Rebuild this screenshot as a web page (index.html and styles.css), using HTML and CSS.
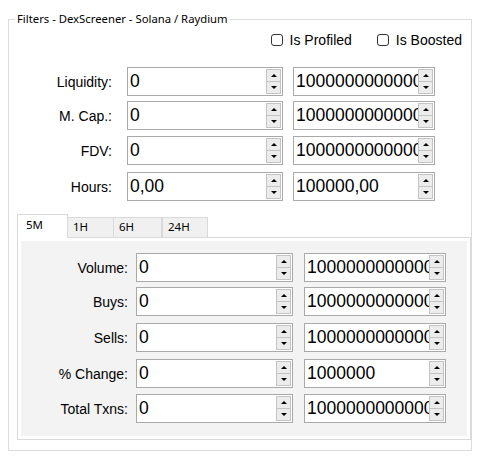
FILE: index.html
```html
<!DOCTYPE html>
<html>
<head>
<meta charset="utf-8">
<link rel="stylesheet" href="styles.css">
</head>
<body>
<div class="group">
  <span class="legend">Filters - DexScreener - Solana / Raydium</span>
  <div class="checks">
    <label class="check"><span class="box"></span>Is Profiled</label>
    <label class="check"><span class="box"></span>Is Boosted</label>
  </div>
  <div class="fields">
    <div class="row r1">
      <span class="lbl">Liquidity:</span>
      <div class="spin s1"><span class="val">0</span><span class="btns"><span class="btn"><i class="up"></i></span><span class="btn"><i class="dn"></i></span></span></div>
      <div class="spin s2"><span class="val">1000000000000</span><span class="btns"><span class="btn"><i class="up"></i></span><span class="btn"><i class="dn"></i></span></span></div>
    </div>
    <div class="row r2">
      <span class="lbl">M. Cap.:</span>
      <div class="spin s1"><span class="val">0</span><span class="btns"><span class="btn"><i class="up"></i></span><span class="btn"><i class="dn"></i></span></span></div>
      <div class="spin s2"><span class="val">1000000000000</span><span class="btns"><span class="btn"><i class="up"></i></span><span class="btn"><i class="dn"></i></span></span></div>
    </div>
    <div class="row r3">
      <span class="lbl">FDV:</span>
      <div class="spin s1"><span class="val">0</span><span class="btns"><span class="btn"><i class="up"></i></span><span class="btn"><i class="dn"></i></span></span></div>
      <div class="spin s2"><span class="val">1000000000000</span><span class="btns"><span class="btn"><i class="up"></i></span><span class="btn"><i class="dn"></i></span></span></div>
    </div>
    <div class="row r4">
      <span class="lbl">Hours:</span>
      <div class="spin s1"><span class="val">0,00</span><span class="btns"><span class="btn"><i class="up"></i></span><span class="btn"><i class="dn"></i></span></span></div>
      <div class="spin s2"><span class="val">100000,00</span><span class="btns"><span class="btn"><i class="up"></i></span><span class="btn"><i class="dn"></i></span></span></div>
    </div>
  </div>

  <div class="tabs">
    <div class="tabstrip">
      <span class="tab sel">5M</span>
      <span class="tab t1">1H</span>
      <span class="tab t2">6H</span>
      <span class="tab t3">24H</span>
    </div>
    <div class="panel">
      <div class="page">
        <div class="row p1">
          <span class="lbl">Volume:</span>
          <div class="spin s1"><span class="val">0</span><span class="btns"><span class="btn"><i class="up"></i></span><span class="btn"><i class="dn"></i></span></span></div>
          <div class="spin s2"><span class="val">1000000000000</span><span class="btns"><span class="btn"><i class="up"></i></span><span class="btn"><i class="dn"></i></span></span></div>
        </div>
        <div class="row p2">
          <span class="lbl">Buys:</span>
          <div class="spin s1"><span class="val">0</span><span class="btns"><span class="btn"><i class="up"></i></span><span class="btn"><i class="dn"></i></span></span></div>
          <div class="spin s2"><span class="val">1000000000000</span><span class="btns"><span class="btn"><i class="up"></i></span><span class="btn"><i class="dn"></i></span></span></div>
        </div>
        <div class="row p3">
          <span class="lbl">Sells:</span>
          <div class="spin s1"><span class="val">0</span><span class="btns"><span class="btn"><i class="up"></i></span><span class="btn"><i class="dn"></i></span></span></div>
          <div class="spin s2"><span class="val">1000000000000</span><span class="btns"><span class="btn"><i class="up"></i></span><span class="btn"><i class="dn"></i></span></span></div>
        </div>
        <div class="row p4">
          <span class="lbl">% Change:</span>
          <div class="spin s1"><span class="val">0</span><span class="btns"><span class="btn"><i class="up"></i></span><span class="btn"><i class="dn"></i></span></span></div>
          <div class="spin s2"><span class="val">1000000</span><span class="btns"><span class="btn"><i class="up"></i></span><span class="btn"><i class="dn"></i></span></span></div>
        </div>
        <div class="row p5">
          <span class="lbl">Total Txns:</span>
          <div class="spin s1"><span class="val">0</span><span class="btns"><span class="btn"><i class="up"></i></span><span class="btn"><i class="dn"></i></span></span></div>
          <div class="spin s2"><span class="val">1000000000000</span><span class="btns"><span class="btn"><i class="up"></i></span><span class="btn"><i class="dn"></i></span></span></div>
        </div>
      </div>
    </div>
  </div>
</div>
</body>
</html>
```

FILE: styles.css
```css
html, body {
  margin: 0;
  padding: 0;
  background: #ffffff;
}
body {
  font-family: "Liberation Sans", Arial, sans-serif;
  color: #000;
}
.group {
  position: relative;
  box-sizing: border-box;
  margin: 19px 0 0 8px;
  width: 464px;
  height: 432px;
  border: 1px solid #dcdcdc;
}
.legend {
  position: absolute;
  left: 6px;
  top: -9px;
  padding: 0 2px 0 2px;
  background: #fff;
  font-family: "Noto Sans", "Open Sans", sans-serif;
  font-size: 11.3px;
  line-height: 16px;
}
.checks {
  display: flex;
  justify-content: flex-end;
  gap: 25px;
  margin-top: 12px;
  height: 16px;
  padding-right: 9px;
}
.check {
  display: flex;
  align-items: center;
  gap: 7px;
  font-size: 14px;
  line-height: 16px;
}
.box {
  box-sizing: border-box;
  width: 12px;
  height: 12px;
  border: 1px solid #333;
  border-radius: 3px;
  background: #fff;
}
.fields {
  margin-top: 19px;
}
.row {
  display: flex;
  align-items: center;
}
.lbl {
  width: 103px;
  text-align: right;
  font-size: 14px;
  line-height: 16px;
  white-space: nowrap;
}
.s1 { width: 156px; margin-left: 15px; }
.s2 { width: 142px; margin-left: 10px; }
.r2 { margin-top: 5px; }
.r3 { margin-top: 6px; }
.r4 { margin-top: 7px; }
.spin {
  box-sizing: border-box;
  display: flex;
  height: 29px;
  border: 1px solid #a9a9a9;
  background: #fff;
}
.val {
  flex: 1;
  min-width: 0;
  overflow: hidden;
  white-space: nowrap;
  padding-left: 2px;
  font-size: 17.5px;
  line-height: 27px;
}
.btns {
  display: flex;
  flex-direction: column;
  width: 15px;
  padding: 1px 1px 1px 0;
}
.btn {
  box-sizing: border-box;
  flex: 1;
  display: flex;
  align-items: center;
  justify-content: center;
  background: #ececec;
  border: 1px solid #c4c4c4;
}
.btn + .btn { border-top: none; }
.up {
  width: 0;
  height: 0;
  border-left: 3px solid transparent;
  border-right: 3px solid transparent;
  border-bottom: 3px solid #000;
}
.dn {
  width: 0;
  height: 0;
  border-left: 3px solid transparent;
  border-right: 3px solid transparent;
  border-top: 3px solid #000;
}
.tabs {
  margin: 13px 0 0 8px;
}
.tabstrip {
  display: flex;
  align-items: flex-end;
  height: 23px;
}
.tab {
  box-sizing: border-box;
  height: 20px;
  padding-left: 5px;
  font-family: "Noto Sans", "Open Sans", sans-serif;
  font-size: 11.5px;
  line-height: 18px;
  background: #f0f0f0;
  border: 1px solid #d9d9d9;
  border-bottom: none;
}
.tab.sel {
  position: relative;
  z-index: 1;
  width: 51px;
  height: 24px;
  margin-bottom: -1px;
  padding-left: 8px;
  line-height: 20px;
  background: #fff;
}
.t1 { width: 46px; border-left: none; }
.t2 { width: 48px; border-left: none; }
.t3 { width: 46px; }
.panel {
  box-sizing: border-box;
  width: 454px;
  height: 203px;
  border: 1px solid #d9d9d9;
  background: #fff;
  padding: 3px;
}
.page {
  height: 100%;
  background: #f3f3f3;
  padding-top: 12px;
  box-sizing: border-box;
}
.page .lbl { width: 107px; }
.page .s1 { width: 157px; margin-left: 8px; }
.page .s2 { width: 142px; margin-left: 11px; }
.p2 { margin-top: 5px; }
.p3 { margin-top: 7px; }
.p4 { margin-top: 7px; }
.p5 { margin-top: 6px; }
```
